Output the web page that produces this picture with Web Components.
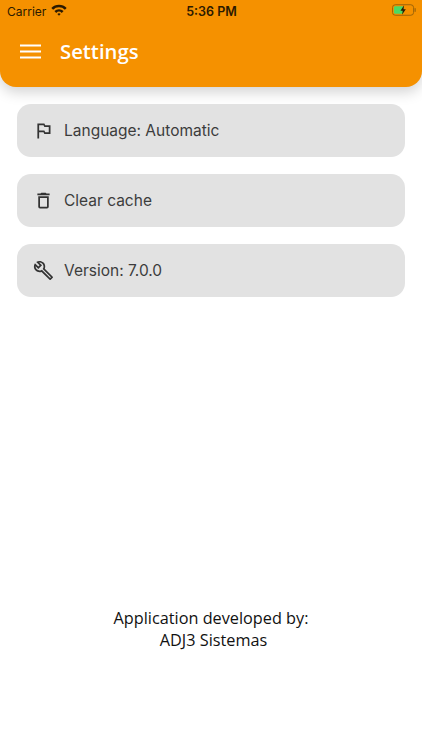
<!DOCTYPE html>
<html>
<head>
<meta charset="utf-8">
<title>Settings</title>
<style>
    html, body { margin: 0; padding: 0; background: #fff; }
</style>
</head>
<body>
<settings-page>
    <status-bar slot="status"></status-bar>
    <app-header slot="header" title="Settings"></app-header>
    <setting-item icon="flag">Language: Automatic</setting-item>
    <setting-item icon="trash">Clear cache</setting-item>
    <setting-item icon="wrench">Version: 7.0.0</setting-item>
    <app-credits slot="footer"></app-credits>
</settings-page>

<script>
class SettingsPage extends HTMLElement {
    constructor() {
        super();
        this.attachShadow({ mode: 'open' });
    }

    connectedCallback() {
        this.shadowRoot.innerHTML = `
            <style>
                :host {
                    display: flex;
                    flex-direction: column;
                    width: 422px;
                    height: 750px;
                    overflow: hidden;
                    background: #fff;
                }

                .top {
                    background: #f59100;
                    border-radius: 0 0 16px 16px;
                    box-shadow: 0 5px 14px rgba(0,0,0,0.18);
                }

                .list {
                    display: flex;
                    flex-direction: column;
                    gap: 17px;
                    padding: 17px 17px 0;
                }

                .bottom {
                    margin-top: auto;
                    padding-bottom: 99px;
                }
            </style>

            <div class="top">
                <slot name="status"></slot>
                <slot name="header"></slot>
            </div>
            <div class="list"><slot></slot></div>
            <div class="bottom"><slot name="footer"></slot></div>
        `;
    }
}
customElements.define('settings-page', SettingsPage);

class StatusBar extends HTMLElement {
    constructor() {
        super();
        this.attachShadow({ mode: 'open' });
    }

    connectedCallback() {
        this.shadowRoot.innerHTML = `
            <style>
                :host {
                    display: grid;
                    grid-template-columns: 1fr auto 1fr;
                    align-items: center;
                    height: 22px;
                    padding: 0 6px 0 7px;
                    font-family: Inter, "Liberation Sans", sans-serif;
                    font-size: 12px;
                    color: #2b1a00;
                }

                .left {
                    display: flex;
                    align-items: center;
                    gap: 5px;
                }

                .time {
                    font-weight: 600;
                    font-size: 12.5px;
                }

                .right {
                    display: flex;
                    justify-content: flex-end;
                }

                svg { display: block; }
            </style>

            <div class="left">
                <span>Carrier</span>
                <svg width="16" height="12" viewBox="0 0 15 11" style="margin-top:-3px">
                    <path d="M0.3 3.6 A10.2 10.2 0 0 1 14.7 3.6 L13 5.3 A7.8 7.8 0 0 0 2 5.3 Z" fill="#2b1a00"/>
                    <path d="M3.2 6.5 A6.1 6.1 0 0 1 11.8 6.5 L10.1 8.2 A3.7 3.7 0 0 0 4.9 8.2 Z" fill="#2b1a00"/>
                    <path d="M6 9.3 A2.1 2.1 0 0 1 9 9.3 L7.5 10.8 Z" fill="#2b1a00"/>
                </svg>
            </div>
            <div class="time">5:36 PM</div>
            <div class="right">
                <svg width="24" height="12" viewBox="0 0 25 12" style="margin-top:-2px">
                    <rect x="0.5" y="0.5" width="22" height="11" rx="3" fill="none" stroke="#9a6208"/>
                    <rect x="2" y="2" width="10" height="8" rx="1.5" fill="#4cd964"/>
                    <rect x="23.5" y="4" width="1.2" height="4" rx="0.6" fill="#9a6208"/>
                    <path d="M12.6 1 L8.8 6.8 H11.2 L10.4 11 L14.4 5.2 H12 Z" fill="#2b1a00"/>
                </svg>
            </div>
        `;
    }
}
customElements.define('status-bar', StatusBar);

class AppHeader extends HTMLElement {
    constructor() {
        super();
        this.attachShadow({ mode: 'open' });
    }

    connectedCallback() {
        this.shadowRoot.innerHTML = `
            <style>
                :host {
                    display: flex;
                    align-items: center;
                    gap: 19px;
                    height: 65px;
                    padding: 0 20px 7px;
                    box-sizing: border-box;
                    color: #fff;
                }

                svg { display: block; flex: none; }

                .title {
                    font-family: "Open Sans", sans-serif;
                    font-size: 20.3px;
                    font-weight: 600;
                }
            </style>

            <svg width="21" height="15" viewBox="0 0 21 15">
                <path d="M0 1.5 H21 M0 7.5 H21 M0 13.5 H21" stroke="#fff" stroke-width="2.2"/>
            </svg>
            <span class="title">${this.getAttribute('title')}</span>
        `;
    }
}
customElements.define('app-header', AppHeader);

const ICONS = {
    flag: 'M14 6l-1-2H5v17h2v-7h5l1 2h7V6h-6zm4 8h-4l-1-2H7V6h5l1 2h5v6z',
    trash: 'M6,19A2,2 0 0,0 8,21H16A2,2 0 0,0 18,19V7H6V19M8,9H16V19H8V9M15.5,4L14.5,3H9.5L8.5,4H5V6H19V4H15.5Z',
    wrench: 'M22.61,19L13.53,9.91C14.46,7.57 14,4.81 12.09,2.91C9.79,0.61 6.21,0.4 3.66,2.26L7.5,6.11L6.08,7.5L2.25,3.69C0.39,6.23 0.6,9.82 2.9,12.11C4.76,13.97 7.47,14.46 9.79,13.59L18.9,22.7C19.29,23.09 19.92,23.09 20.31,22.7L22.61,20.4C23,20 23,19.39 22.61,19M19.61,20.59L10.15,11.13C9.54,11.58 8.86,11.85 8.15,11.95C6.79,12.15 5.36,11.74 4.32,10.7C3.37,9.76 2.93,8.5 3,7.26L6.09,10.35L10.33,6.11L7.24,3C8.5,2.95 9.73,3.39 10.68,4.33C11.76,5.41 12.17,6.9 11.92,8.29C11.8,9 11.5,9.66 11.04,10.25L20.5,19.7L19.61,20.59Z'
};

class SettingItem extends HTMLElement {
    constructor() {
        super();
        this.attachShadow({ mode: 'open' });
    }

    connectedCallback() {
        this.shadowRoot.innerHTML = `
            <style>
                :host {
                    display: flex;
                    align-items: center;
                    gap: 10px;
                    height: 53px;
                    padding: 0 16px;
                    background: #e2e2e2;
                    border-radius: 14px;
                    font-family: Inter, "Liberation Sans", sans-serif;
                    font-size: 15.5px;
                    color: #3c3c3c;
                }

                svg { display: block; flex: none; }
            </style>

            <svg width="21" height="21" viewBox="0 0 24 24"><path fill="#333" d="${ICONS[this.getAttribute('icon')]}"/></svg>
            <slot></slot>
        `;
    }
}
customElements.define('setting-item', SettingItem);

class AppCredits extends HTMLElement {
    constructor() {
        super();
        this.attachShadow({ mode: 'open' });
    }

    connectedCallback() {
        this.shadowRoot.innerHTML = `
            <style>
                :host {
                    display: block;
                    font-family: "Open Sans", sans-serif;
                    font-size: 16.25px;
                    line-height: 22px;
                    text-align: center;
                    color: #111;
                }

                .name { padding-left: 5px; }
            </style>

            <div>Application developed by:</div>
            <div class="name">ADJ3 Sistemas</div>
        `;
    }
}
customElements.define('app-credits', AppCredits);
</script>
</body>
</html>
